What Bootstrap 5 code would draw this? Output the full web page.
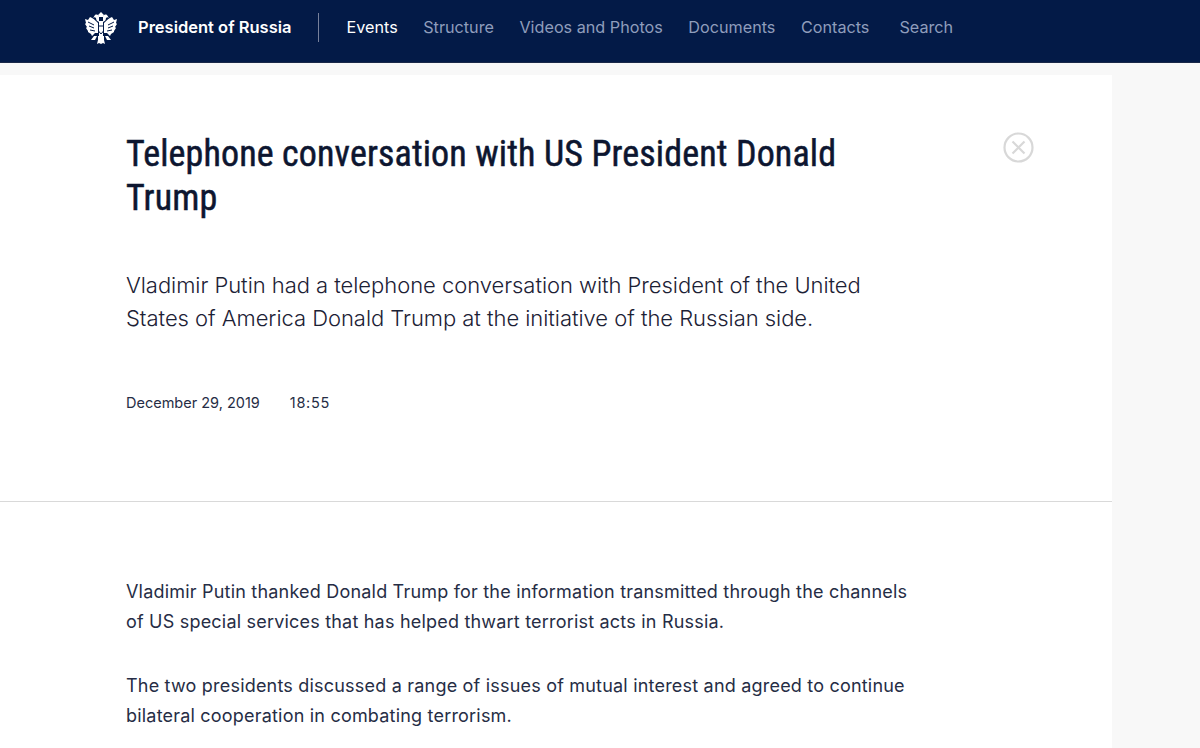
<!DOCTYPE html>
<html lang="en">
<head>
<meta charset="utf-8">
<title>Telephone conversation with US President Donald Trump</title>
<link rel="stylesheet" href="https://cdn.jsdelivr.net/npm/bootstrap@5.3.0/dist/css/bootstrap.min.css">
<style>
html,body{height:748px;overflow:hidden}
body{background:#f8f8f8;font-family:Inter,"Liberation Sans",sans-serif;color:#262d45}
.topbar{height:63px;background:#031a47;border-bottom:1px solid #1a2848;padding:0 0 8px 84px}
.crest{width:34px;height:33px;margin-right:20px}
.brand{font-size:16.5px;font-weight:600;color:#fff;text-decoration:none;padding-right:26px;border-right:1px solid #76809b;line-height:29px;margin-right:28px}
.toplink{font-size:16.2px;color:#8f9dbc;text-decoration:none;margin-right:25.5px}
.toplink.on{color:#fff}
.toplink.find{margin-left:4.500px}
.sheet{background:#fff;width:1112px;min-height:700px;margin-top:12px;position:relative}
.head-area{height:427px;padding:57px 0 0 126px;border-bottom:1px solid #d9d9d9}
.ttl{font-family:Roboto,"Liberation Sans",sans-serif;font-stretch:condensed;font-weight:400;-webkit-text-stroke:.5px #0d1630;font-size:36px;line-height:44px;color:#0d1630;width:760px;margin:0;letter-spacing:.13px}
.lede{font-size:22px;font-weight:300;line-height:33px;width:780px;margin:49px 0 0;color:#1c2135;letter-spacing:-.045px}
.stamp{font-size:14.5px;margin-top:58px;line-height:20px}
.stamp span+span{margin-left:30px;letter-spacing:.7px}
.shut{position:absolute;left:1003px;top:57px;width:31px;height:31px}
.story{padding:75px 0 0 126px;width:920px}
.story p{font-size:18px;line-height:30px;margin:0 0 34px;letter-spacing:.2px}
</style>
</head>
<body>
<nav class="topbar d-flex align-items-center">
  <svg class="crest" viewBox="0 0 34 33" aria-hidden="true">
    <defs>
      <g id="half">
        <path fill="#fff" d="M14 12C11 9 9 7 6 6L4 9 1 8l1 4-1 1 2 3-1 1 2 3v1l3 2 1 2 3-3h3z"/>
        <path fill="#fff" d="M15 11c-2-1-3-2-3-4-1-1-2-1-3 0l2-3c2-1 4 0 4 2z"/>
        <path fill="#fff" d="M14 25h3v8l-2-1-2 1 1-4z"/>
        <path fill="#fff" d="M10 25h3l-2 4H7z"/>
        <path fill="none" stroke="#031a47" d="M4 11l6 3M5 15l5 2M6 19l5 1"/>
      </g>
    </defs>
    <use href="#half"/>
    <use href="#half" transform="matrix(-1 0 0 1 34 0)"/>
    <path fill="#fff" d="M14 4l3-3 3 3-1 2h-4zM15 10h4v15h-4z"/>
    <path fill="none" stroke="#031a47" d="M14.500 15h5v5l-2.500 3-2.500-3z"/>
  </svg>
  <a class="brand" href="#">President of Russia</a>
  <a class="toplink on" href="#">Events</a>
  <a class="toplink" href="#">Structure</a>
  <a class="toplink" href="#">Videos and Photos</a>
  <a class="toplink" href="#">Documents</a>
  <a class="toplink" href="#">Contacts</a>
  <a class="toplink find" href="#">Search</a>
</nav>
<main class="sheet">
  <section class="head-area">
    <h1 class="ttl">Telephone conversation with US President Donald Trump</h1>
    <p class="lede">Vladimir Putin had a telephone conversation with President of the United States of America Donald Trump at the initiative of the Russian side.</p>
    <div class="stamp"><span>December 29, 2019</span><span>18:55</span></div>
  </section>
  <svg class="shut" viewBox="0 0 31 31" aria-hidden="true" fill="none" stroke="#d8d8d8" stroke-width="2.200"><circle cx="15.500" cy="15.500" r="14"/><path d="M9.500 9.500l12 12M21.500 9.500l-12 12"/></svg>
  <section class="story">
    <p>Vladimir Putin thanked Donald Trump for the information transmitted through the channels of US special services that has helped thwart terrorist acts in Russia.</p>
    <p>The two presidents discussed a range of issues of mutual interest and agreed to continue bilateral cooperation in combating terrorism.</p>
  </section>
</main>
</body>
</html>
